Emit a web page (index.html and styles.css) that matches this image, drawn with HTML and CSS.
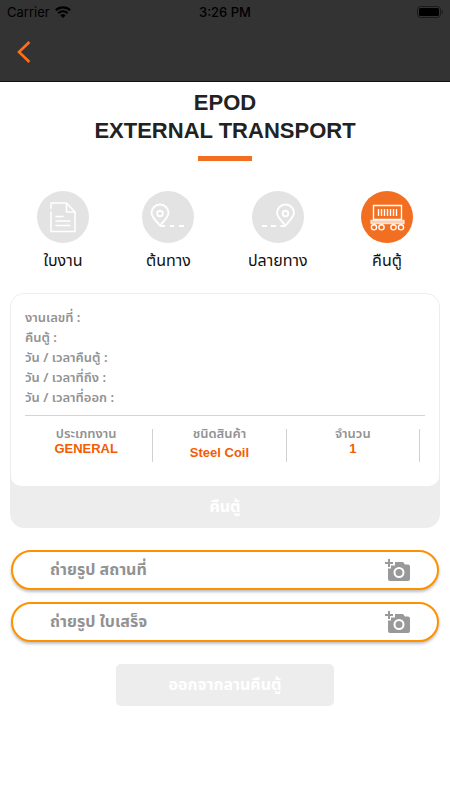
FILE: index.html
```html
<!DOCTYPE html>
<html lang="th">
<head>
  <meta charset="utf-8">
  <meta name="viewport" content="width=device-width, initial-scale=1.0">
  <title>EPOD</title>
  <link rel="stylesheet" href="styles.css">
</head>
<body>
  <header class="topbar">
    <div class="status">
      <div class="carrier">
        <span>Carrier</span>
        <svg width="16" height="12" viewBox="0 0 16 12" fill="none" stroke="#000" stroke-width="2.2">
          <path d="M.8 4.300a10.200 10.200 0 0 1 14.400 0M3.300 7.200a6.700 6.700 0 0 1 9.400 0"/>
          <path d="M8 12 5.400 9.400a3.700 3.700 0 0 1 5.200 0z" fill="#000" stroke="none"/>
        </svg>
      </div>
      <time>3:26 PM</time>
      <div class="battery">
        <svg width="26" height="12" viewBox="0 0 26 12">
          <rect x=".5" y=".5" width="23" height="11" rx="3" fill="none" stroke="#1a1a1a"/>
          <rect x="2" y="2" width="20" height="8" rx="1.5"/>
          <path d="M24.800 4v4q1.200-.6 1.200-2t-1.200-2z" fill="#1a1a1a"/>
        </svg>
      </div>
    </div>
    <button class="back" type="button" aria-label="Back">
      <svg width="14" height="22" viewBox="0 0 14 22" fill="none" stroke="#ff6f1a" stroke-width="2.6">
        <path d="M12.400 1 2 11l10.400 10"/>
      </svg>
    </button>
  </header>

  <main>
    <h1>EPOD<br>EXTERNAL TRANSPORT</h1>

    <nav class="steps">
      <a class="step" href="#">
        <svg class="step-icon" width="52" height="52" viewBox="0 0 52 52" fill="none" stroke="#fff" stroke-width="1.5" stroke-linecap="round" stroke-linejoin="round">
          <path d="M14 17.500v-5.500h15.500l8.500 9v19.500h-24v-19.500M29.500 12v9h8.500"/>
          <path d="M19 25.500h7M19 30h14M19 34.500h14"/>
        </svg>
        <span>ใบงาน</span>
      </a>
      <a class="step" href="#">
        <svg class="step-icon" width="52" height="52" viewBox="0 0 52 52" fill="none" stroke="#fff" stroke-width="1.9" stroke-linejoin="round">
          <path d="M18 34.500c-4-4.500-8.500-9-8.500-12.500a8.500 8.500 0 0 1 17 0c0 3.500-4.500 8-8.500 12.500z"/>
          <circle cx="18" cy="22.500" r="2.800"/>
          <path d="M18 35h5M28 35h4M37 35h5"/>
        </svg>
        <span>ต้นทาง</span>
      </a>
      <a class="step" href="#">
        <svg class="step-icon" width="52" height="52" viewBox="0 0 52 52" fill="none" stroke="#fff" stroke-width="1.9" stroke-linejoin="round">
          <path d="M33.500 34.500c-4-4.500-8.500-9-8.500-12.500a8.500 8.500 0 0 1 17 0c0 3.500-4.500 8-8.500 12.500z"/>
          <circle cx="33.500" cy="22.500" r="2.800"/>
          <path d="M33.500 35h-5M24 35h-5M15 35h-5"/>
        </svg>
        <span>ปลายทาง</span>
      </a>
      <a class="step active" href="#">
        <svg class="step-icon" width="52" height="52" viewBox="0 0 52 52" fill="none" stroke="#fff" stroke-width="1.4">
          <path d="M12.500 14.500h28v14h-28z"/>
          <path d="M17.500 18v7M20.500 18v7M23.500 18v7M26.500 18v7M29.500 18v7M32.500 18v7M35.500 18v7"/>
          <path d="M10 29.500h33v3h-33z" fill="#fff" fill-opacity=".6" stroke-opacity=".7"/>
          <circle cx="13" cy="36.300" r="2.600"/>
          <circle cx="20.500" cy="36.300" r="2.600"/>
          <circle cx="32.500" cy="36.300" r="2.600"/>
          <circle cx="40" cy="36.300" r="2.600"/>
        </svg>
        <span>คืนตู้</span>
      </a>
    </nav>

    <section class="card">
      <div class="card-body">
        <ul class="info">
          <li>งานเลขที่ :</li>
          <li>คืนตู้ :</li>
          <li>วัน / เวลาคืนตู้ :</li>
          <li>วัน / เวลาที่ถึง :</li>
          <li>วัน / เวลาที่ออก :</li>
        </ul>
        <dl class="summary">
          <div>
            <dt>ประเภทงาน</dt>
            <dd>GENERAL</dd>
          </div>
          <div class="product">
            <dt>ชนิดสินค้า</dt>
            <dd>Steel Coil</dd>
          </div>
          <div>
            <dt>จำนวน</dt>
            <dd>1</dd>
          </div>
        </dl>
      </div>
      <button class="card-action" type="button">คืนตู้</button>
    </section>

    <div class="photos">
      <button class="photo" type="button">
        <span>ถ่ายรูป สถานที่</span>
        <svg width="26" height="24" viewBox="0 0 26 24">
          <path d="M4 1v8M0 5h8" stroke="#999" stroke-width="2"/>
          <path fill="#999" fill-rule="evenodd" d="M10 4h8l2 2.500h3a2 2 0 0 1 2 2v12.500a2 2 0 0 1-2 2h-18a2 2 0 0 1-2-2v-10.500h3v-3h4zM14 9a5.500 5.500 0 1 0 0 11a5.500 5.500 0 1 0 0-11zm0 2a3.500 3.500 0 1 1 0 7a3.500 3.500 0 1 1 0-7z"/>
        </svg>
      </button>
      <button class="photo" type="button">
        <span>ถ่ายรูป ใบเสร็จ</span>
        <svg width="26" height="24" viewBox="0 0 26 24">
          <path d="M4 1v8M0 5h8" stroke="#999" stroke-width="2"/>
          <path fill="#999" fill-rule="evenodd" d="M10 4h8l2 2.500h3a2 2 0 0 1 2 2v12.500a2 2 0 0 1-2 2h-18a2 2 0 0 1-2-2v-10.500h3v-3h4zM14 9a5.500 5.500 0 1 0 0 11a5.500 5.500 0 1 0 0-11zm0 2a3.500 3.500 0 1 1 0 7a3.500 3.500 0 1 1 0-7z"/>
        </svg>
      </button>
    </div>

    <button class="leave" type="button">ออกจากลานคืนตู้</button>
  </main>
</body>
</html>
```
FILE: styles.css
```css
:root {
  --orange: #f26f21;
  --grey: #ededed;
  --text-grey: #929292;
}
* {
  box-sizing: border-box;
}
body {
  margin: 0;
  background-color: #fff;
  font-family: "Liberation Sans", "Noto Sans Thai", "Noto Sans", sans-serif;
}
button {
  border: none;
  padding: 0;
  font-family: "Noto Sans Thai", "Noto Sans", sans-serif;
  font-weight: bold;
  cursor: pointer;
}
a {
  color: inherit;
  text-decoration: none;
}
.topbar {
  height: 82px;
  background-color: #333;
  border-bottom: 1px solid #111;
}
.status {
  display: grid;
  grid-template-columns: 1fr auto 1fr;
  align-items: center;
  height: 23px;
  padding: 0 7px;
  font-family: Inter, sans-serif;
  font-size: 13px;
  color: #000;
}
.status time {
  font-weight: 500;
}
.carrier {
  display: flex;
  align-items: center;
  gap: 5px;
}
.battery {
  display: flex;
  justify-content: flex-end;
}
.back {
  display: block;
  margin: 18px 0 0 17px;
  height: 22px;
  background: none;
}
.back svg {
  display: block;
}
h1 {
  margin: 0;
  padding-top: 7px;
  font-size: 22px;
  line-height: 28px;
  text-align: center;
  color: #222;
}
h1::after {
  content: "";
  display: block;
  width: 54px;
  height: 5px;
  margin: 11px auto 0;
  background-color: var(--orange);
}
.steps {
  display: flex;
  justify-content: space-between;
  padding: 30px 37px 0;
}
.step {
  display: flex;
  flex-direction: column;
  align-items: center;
  font-size: 16px;
  line-height: 24px;
  color: #111;
}
.step-icon {
  margin-bottom: 6px;
  border-radius: 50%;
  background-color: #e3e3e3;
}
.step.active .step-icon {
  background-color: var(--orange);
}
.card {
  margin: 20px 10px 0;
  border: 1px solid var(--grey);
  border-radius: 14px;
  background-color: var(--grey);
  overflow: hidden;
}
.card-body {
  padding: 14px;
  border-radius: 0 0 10px 10px;
  background-color: #fff;
}
.info {
  margin: 0;
  padding: 0 0 7px;
  border-bottom: 1px solid #d5d5d5;
  list-style: none;
  font-family: "Noto Sans Thai", "Noto Sans", sans-serif;
  font-size: 13px;
  font-weight: 600;
  line-height: 20px;
  color: var(--text-grey);
}
.summary {
  display: flex;
  margin: 13px 5px 10px -5px;
  text-align: center;
}
.summary > div {
  flex: 1;
  height: 33px;
  border-right: 1px solid #d0d0d0;
}
.summary dt {
  font-size: 13px;
  font-weight: 600;
  line-height: 10px;
  color: var(--text-grey);
}
.summary dd {
  margin: 0;
  font-size: 13px;
  font-weight: bold;
  line-height: 20px;
  color: #f25c05;
}
.summary .product dd {
  line-height: 28px;
}
.card-action {
  display: block;
  width: 100%;
  height: 41px;
  background: none;
  font-size: 16px;
  color: #fff;
}
.photos {
  display: grid;
  gap: 12px;
  margin: 22px 11px;
}
.photo {
  display: flex;
  align-items: center;
  justify-content: space-between;
  height: 40px;
  padding: 0 26px 0 37px;
  border: 2px solid #ff9100;
  border-radius: 20px;
  background-color: #fff;
  box-shadow: 0 2px 3px rgba(0, 0, 0, 0.25);
  font-size: 16px;
  color: var(--text-grey);
}
.leave {
  display: block;
  width: 218px;
  height: 42px;
  margin: 0 auto;
  border-radius: 5px;
  background-color: var(--grey);
  font-size: 16px;
  color: #fff;
}
```
